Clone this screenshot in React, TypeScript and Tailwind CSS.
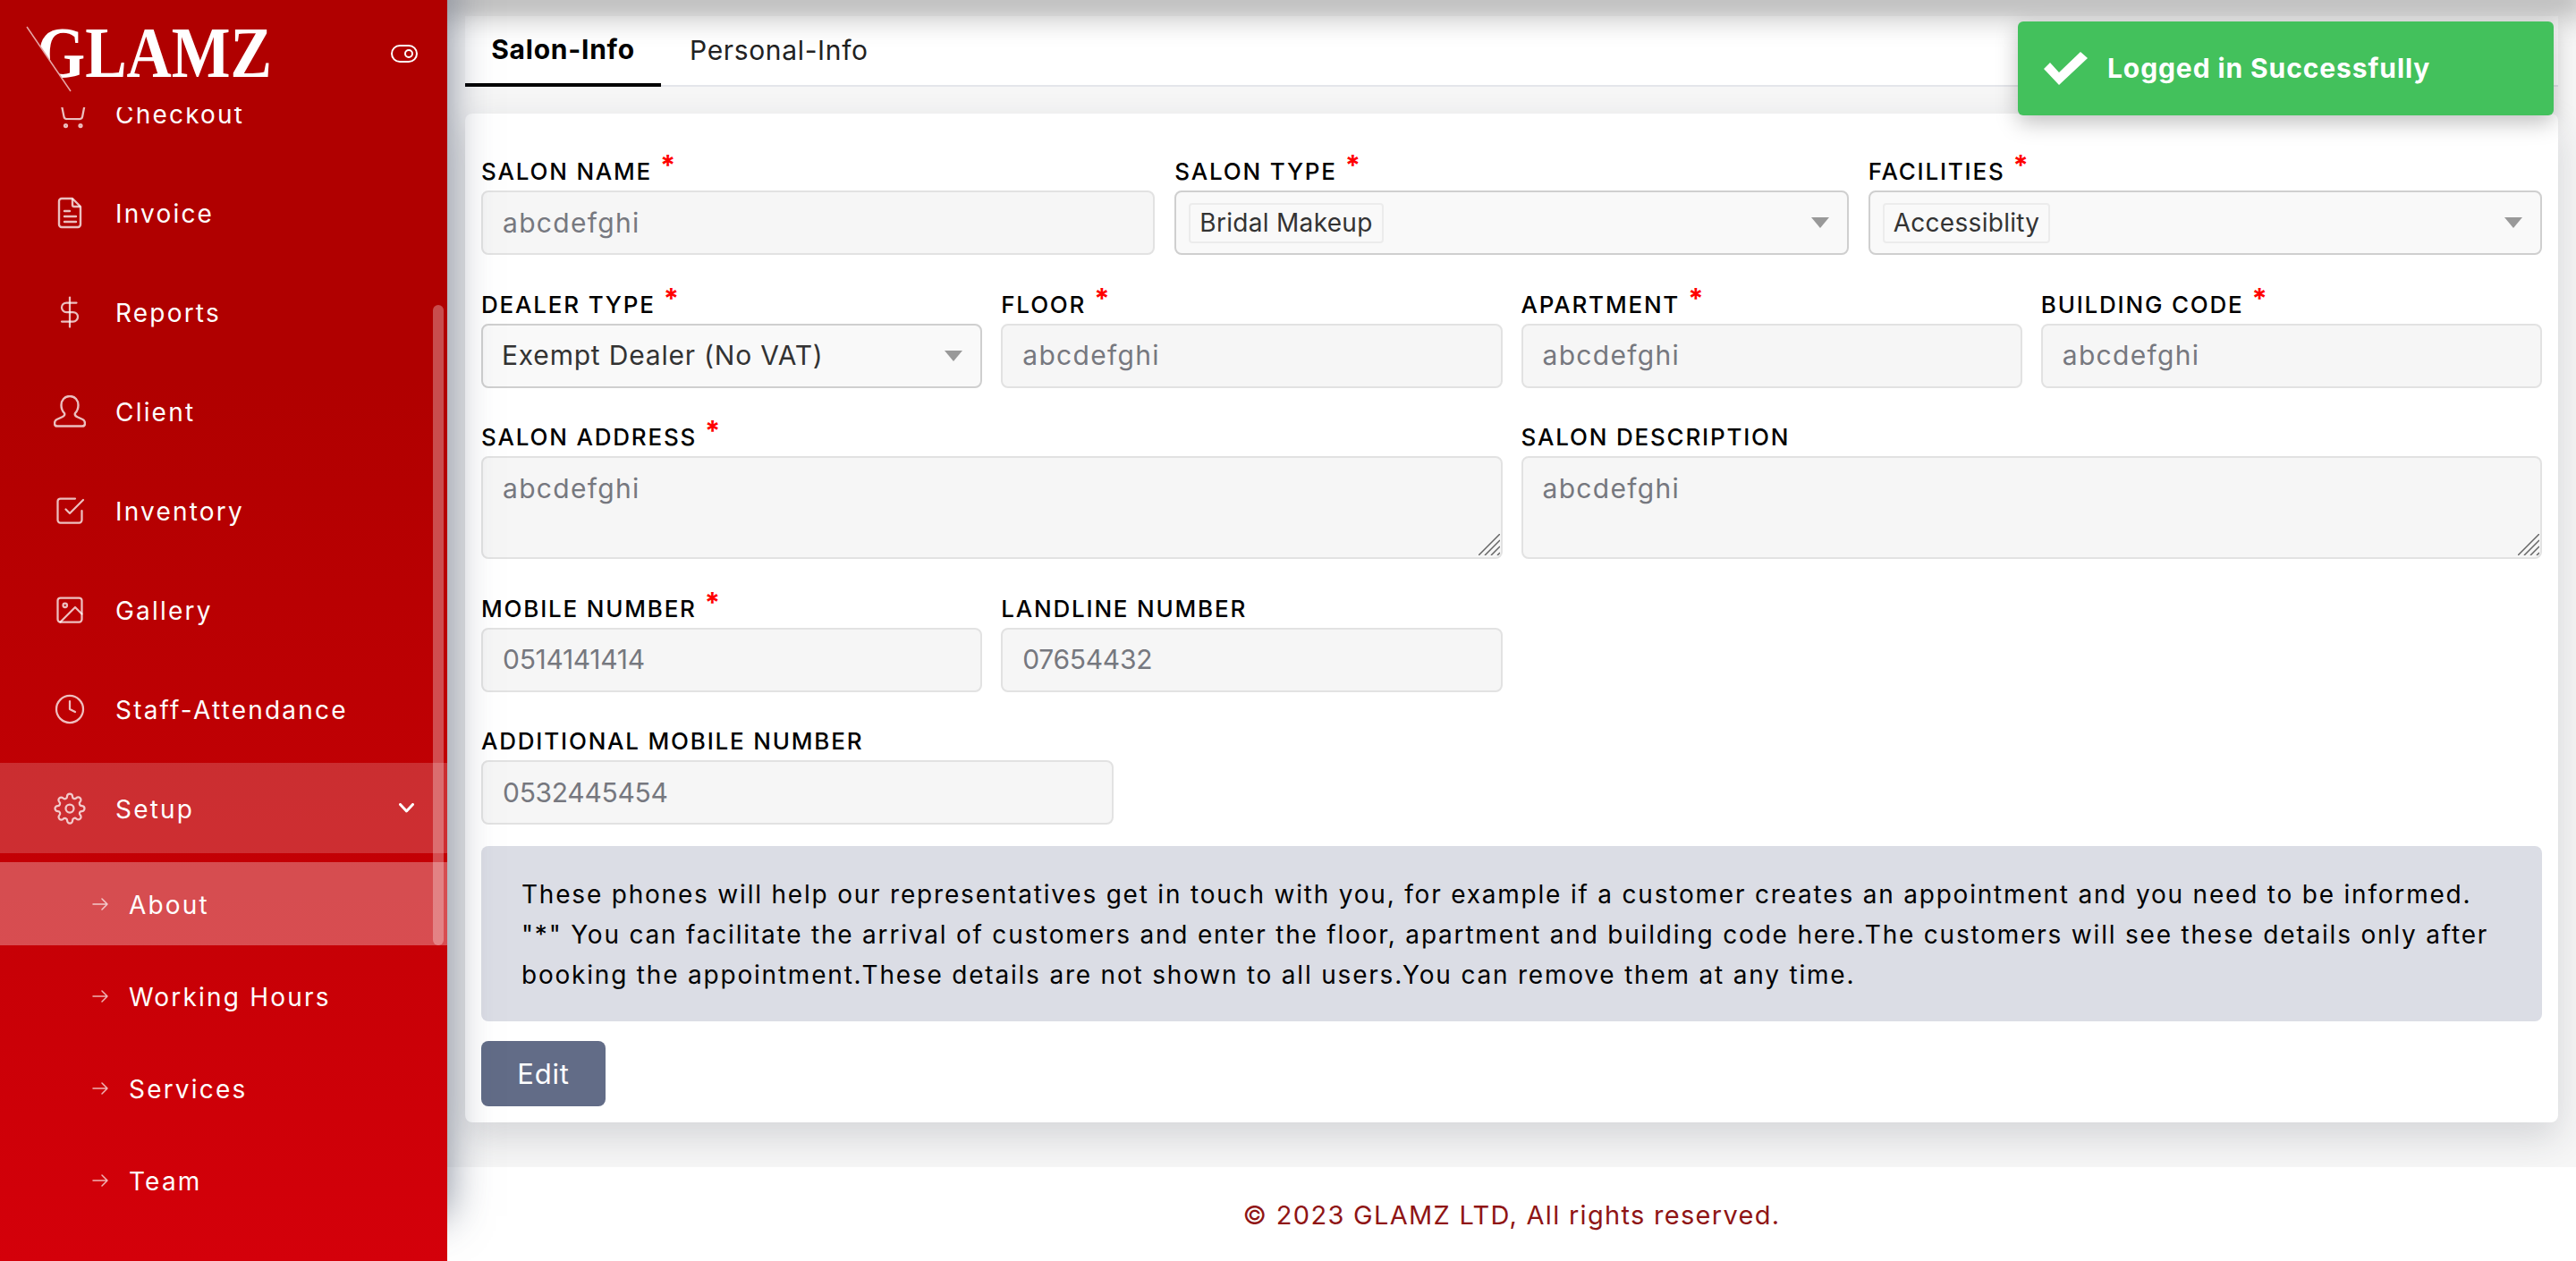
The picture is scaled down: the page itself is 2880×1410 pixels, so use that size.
import { FiCheckSquare, FiClock, FiDollarSign, FiImage, FiSettings, FiShoppingCart } from "react-icons/fi";
import type { ReactNode } from "react";

const font = "font-['Inter','Liberation_Sans',sans-serif]";

function InvoiceIcon() {
  return (
    <svg width="36" height="36" viewBox="0 0 36 36" fill="none" stroke="currentColor" strokeWidth="2.4" strokeLinejoin="round" strokeLinecap="round">
      <path d="M9 2h12l9 9v20a3 3 0 0 1-3 3H9a3 3 0 0 1-3-3V5a3 3 0 0 1 3-3z" />
      <path d="M21 3v6a2 2 0 0 0 2 2h6" />
      <path d="M12 16h6M12 22h13M12 28h13" />
    </svg>
  );
}

function ClientIcon() {
  return (
    <svg width="36" height="36" viewBox="0 0 36 36" fill="none" stroke="currentColor" strokeWidth="2.4" strokeLinejoin="round" strokeLinecap="round">
      <path d="M18 1c-6 0-9.500 4.500-9.500 10 0 4 1.500 7 3.500 9 .8 2-.5 3.500-3 4.500L3.500 27c-2 1-2.500 2.500-2.500 4.500 0 2 1 3 3 3h28c2 0 3-1 3-3 0-2-.5-3.500-2.500-4.500L27 24.500c-2.500-1-3.800-2.500-3-4.500 2-2 3.500-5 3.500-9 0-5.500-3.500-10-9.500-10z" />
    </svg>
  );
}

function ArrowIcon() {
  return (
    <svg width="18" height="14" viewBox="0 0 18 14" fill="none" stroke="currentColor" strokeWidth="1.5" strokeLinecap="round" strokeLinejoin="round">
      <path d="M1 7h16M11 1l6 6-6 6" />
    </svg>
  );
}

function Logo() {
  return (
    <div className="relative w-[300px] h-[120px]">
      <span className="absolute left-[41px] top-[13px] origin-left scale-x-[0.87] text-[80px] leading-[92px] font-bold text-white font-['Liberation_Serif',serif]">
        GLAMZ
      </span>
      <svg className="absolute left-0 top-0" width="120" height="110" viewBox="0 0 120 110">
        <polygon points="30,30 79,102 30,102" fill="#b00000" />
        <path d="M30 30 L79 102" stroke="#e6a6a6" strokeWidth="1.5" />
      </svg>
    </div>
  );
}

function NavRow({ icon, label }: { icon: ReactNode; label: string }) {
  return (
    <div className="h-[101px] flex items-center shrink-0">
      <span className="w-[129px] pl-[60px] text-white/75 flex items-center">{icon}</span>
      <span className="pt-[2px] text-[28px] tracking-[2.2px] text-white">{label}</span>
    </div>
  );
}

function SubRow({ label, active }: { label: string; active?: boolean }) {
  return (
    <div className={`h-[93px] flex items-center shrink-0 ${active ? "bg-white/30" : ""}`}>
      <span className="w-[144px] pl-[103px] text-white/70 flex items-center">
        <ArrowIcon />
      </span>
      <span className="pt-[2px] text-[28px] tracking-[2.2px] text-white">{label}</span>
    </div>
  );
}

function Sidebar() {
  return (
    <aside className="relative z-10 w-[500px] h-[1410px] shrink-0 flex flex-col overflow-visible bg-linear-to-b from-[#b00000] from-30% to-[#d4000a] shadow-[0_-50px_45px_rgba(60,70,95,0.65)]">
      <div className="h-[120px] shrink-0 flex items-center justify-between pr-[33px]">
        <Logo />
        <svg className="-mt-[1px]" width="30" height="20" viewBox="0 0 30 20" fill="none" stroke="white" strokeWidth="2">
          <rect x="1" y="1" width="28" height="18" rx="9" />
          <circle cx="20" cy="10" r="4" />
        </svg>
      </div>
      <div className="relative flex-1 overflow-hidden">
        <div className="-mt-[44px] flex flex-col gap-[10px]">
          <NavRow icon={<FiShoppingCart size={36} strokeWidth={1.5} />} label="Checkout" />
          <NavRow icon={<InvoiceIcon />} label="Invoice" />
          <NavRow icon={<FiDollarSign size={36} strokeWidth={1.5} />} label="Reports" />
          <NavRow icon={<ClientIcon />} label="Client" />
          <NavRow icon={<FiCheckSquare size={36} strokeWidth={1.5} />} label="Inventory" />
          <NavRow icon={<FiImage size={36} strokeWidth={1.5} />} label="Gallery" />
          <NavRow icon={<FiClock size={36} strokeWidth={1.5} />} label="Staff-Attendance" />
          <div className="h-[101px] shrink-0 flex items-center justify-between bg-white/18 pr-[37px]">
            <div className="flex items-center">
              <span className="w-[129px] pl-[60px] text-white/75 flex items-center">
                <FiSettings size={36} strokeWidth={1.5} />
              </span>
              <span className="pt-[2px] text-[28px] tracking-[2.2px] text-white">Setup</span>
            </div>
            <svg width="17" height="11" viewBox="0 0 17 11" fill="none" stroke="white" strokeWidth="3" strokeLinecap="round" strokeLinejoin="round">
              <path d="M1.500 1.500 8.500 9 15.500 1.500" />
            </svg>
          </div>
          <SubRow label="About" active />
          <SubRow label="Working Hours" />
          <SubRow label="Services" />
          <SubRow label="Team" />
        </div>
        {/* sidebar's own scroll thumb */}
        <div className="absolute right-[4px] top-[221px] w-[12px] h-[716px] rounded-[6px] bg-white/30" />
      </div>
    </aside>
  );
}

function Label({ text, required }: { text: string; required?: boolean }) {
  return (
    <div className="h-[56px] flex items-end pb-[6px]">
      <span className="text-[26px] leading-[30px] tracking-[1.8px] text-black font-medium whitespace-nowrap">
        {text}
        {required && <span className="ml-[9px] text-[#ff0000] text-[31px] font-bold leading-[20px] align-[5px]">*</span>}
      </span>
    </div>
  );
}

function TextField({ label, value, required, area }: { label: string; value: string; required?: boolean; area?: boolean }) {
  const numeric = /^\d+$/.test(value);
  const tracking = numeric ? "tracking-[-0.3px]" : "tracking-[1.3px]";
  return (
    <div>
      <Label text={label} required={required} />
      {area ? (
        <div className={`relative h-[115px] rounded-[8px] border-2 border-[#e2e2e2] bg-[#f6f6f6] px-[22px] pt-[16px] text-[30px] leading-[36px] text-[#76787f] ${tracking}`}>
          {value}
          <svg className="absolute right-[1px] bottom-[2px]" width="24" height="24" viewBox="0 0 24 24" stroke="#666" strokeWidth="1.500">
            <path d="M0 24 24 0M7 24 24 7M14 24 24 14M21 24 24 21" />
          </svg>
        </div>
      ) : (
        <div className={`h-[72px] rounded-[8px] border-2 border-[#e2e2e2] bg-[#f6f6f6] px-[22px] flex items-center text-[30px] text-[#76787f] ${tracking}`}>
          {value}
        </div>
      )}
    </div>
  );
}

function Caret() {
  return <span className="w-0 h-0 border-x-[10px] border-x-transparent border-t-[12px] border-t-[#999]" />;
}

function SelectField({ label, value, plain }: { label: string; value: string; plain?: boolean }) {
  return (
    <div>
      <Label text={label} required />
      <div className="h-[72px] rounded-[8px] border-2 border-[#cfcfcf] bg-[#f9f9f9] flex items-center justify-between pl-[14px] pr-[20px] text-[#333]">
        {plain ? (
          <span className="pl-[7px] text-[30px] tracking-[0.8px]">{value}</span>
        ) : (
          <span className="h-[45px] flex items-center rounded-[4px] border-2 border-[#ececec] px-[10px] text-[28px] tracking-[0.3px]">{value}</span>
        )}
        <Caret />
      </div>
    </div>
  );
}

function SalonForm() {
  return (
    <section className="rounded-[8px] bg-white px-[18px] pt-[30px] pb-[18px] shadow-[0_16px_40px_rgba(40,45,60,0.16)]">
      <div className="flex flex-col gap-y-[20.500px]">
        <div className="grid grid-cols-3 gap-x-[22px]">
          <TextField label="SALON NAME" value="abcdefghi" required />
          <SelectField label="SALON TYPE" value="Bridal Makeup" />
          <SelectField label="FACILITIES" value="Accessiblity" />
        </div>
        <div className="grid grid-cols-4 gap-x-[21px]">
          <SelectField label="DEALER TYPE" value="Exempt Dealer (No VAT)" plain />
          <TextField label="FLOOR" value="abcdefghi" required />
          <TextField label="APARTMENT" value="abcdefghi" required />
          <TextField label="BUILDING CODE" value="abcdefghi" required />
        </div>
        <div className="grid grid-cols-2 gap-x-[21px]">
          <TextField label="SALON ADDRESS" value="abcdefghi" required area />
          <TextField label="SALON DESCRIPTION" value="abcdefghi" area />
        </div>
        <div className="grid grid-cols-4 gap-x-[21px]">
          <TextField label="MOBILE NUMBER" value="0514141414" required />
          <TextField label="LANDLINE NUMBER" value="07654432" />
        </div>
        <div className="w-[707px]">
          <TextField label="ADDITIONAL MOBILE NUMBER" value="0532445454" />
        </div>
      </div>
      <div className="mt-[24px] h-[196px] rounded-[8px] bg-[#dbdde5] px-[45px] pt-[32px] text-[28px] leading-[45px] tracking-[1.8px] text-black">
        <p>These phones will help our representatives get in touch with you, for example if a customer creates an appointment and you need to be informed.</p>
        <p>"*" You can facilitate the arrival of customers and enter the floor, apartment and building code here.The customers will see these details only after booking the appointment.These details are not shown to all users.You can remove them at any time.</p>
      </div>
      <button className="mt-[22px] w-[139px] h-[73px] pt-[2px] rounded-[8px] bg-[#626c87] text-white text-[31px] tracking-[0.8px]">Edit</button>
    </section>
  );
}

function Toast() {
  return (
    <div className="absolute z-20 right-[25px] top-[24px] w-[599px] h-[105px] rounded-[6px] bg-[#43c15c] flex items-center pl-[29px] gap-[22px] shadow-[0_8px_24px_rgba(0,0,0,0.25)]">
      <svg width="49" height="37" viewBox="0 0 49 37" fill="white">
        <path d="M0 19 L7 12 L17 23 L41 0 L49 7 L17 37 Z" />
      </svg>
      <span className="text-[30px] font-bold text-white tracking-[0.9px]">Logged in Successfully</span>
    </div>
  );
}

export default function App() {
  return (
    <div className={`relative w-[2880px] h-[1410px] overflow-hidden flex bg-[#f6f6f6] ${font}`}>
      <Sidebar />
      <main className="relative flex-1 flex flex-col min-w-0">
        <div className="absolute left-0 right-0 top-0 h-0 z-[5] shadow-[0_0_36px_12px_rgba(0,0,0,0.42)]" />
        <div className="flex-1 pt-[18px] pl-[20px] pr-[20px]">
          <div className="h-[79px] bg-white border-b-2 border-[#e4e5ea] flex">
            <div className="w-[219px] h-[79px] border-b-4 border-black flex items-center justify-center text-[30px] font-bold tracking-[0.75px] text-black">Salon-Info</div>
            <div className="pl-[32px] flex items-center text-[30px] tracking-[0.65px] text-[#222]">Personal-Info</div>
          </div>
          <div className="h-[30px]" />
          <SalonForm />
        </div>
        <footer className="relative h-[105px] pt-[2px] bg-white flex items-center justify-center text-[29px] text-[#8f1515] tracking-[1.3px]">
          © 2023 GLAMZ LTD, All rights reserved.
        </footer>
        <Toast />
      </main>
    </div>
  );
}
